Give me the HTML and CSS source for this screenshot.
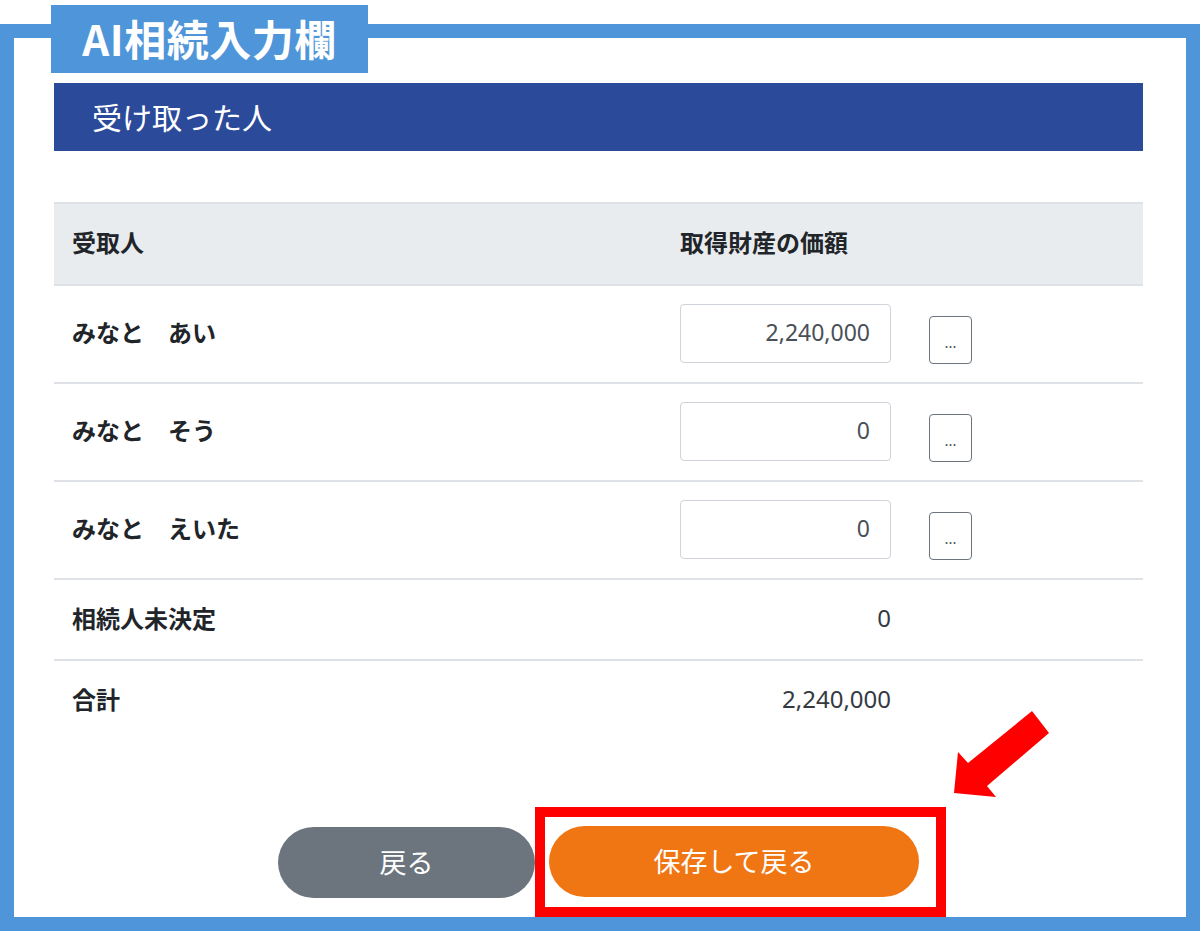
FILE: index.html
```html
<!DOCTYPE html>
<html lang="ja">
<head>
<meta charset="utf-8">
<title>AI相続入力欄</title>
<link rel="stylesheet" href="styles.css">
</head>
<body>
<div class="frame">
  <div class="badge">AI相続入力欄</div>
  <div class="section-title">受け取った人</div>
  <div class="table">
    <div class="row row-head">
      <div class="cell-name">受取人</div>
      <div class="cell-val">取得財産の価額</div>
    </div>
    <div class="row row-input">
      <div class="cell-name">みなと　あい</div>
      <div class="input">2,240,000</div>
      <div class="more">...</div>
    </div>
    <div class="row row-input">
      <div class="cell-name">みなと　そう</div>
      <div class="input">0</div>
      <div class="more">...</div>
    </div>
    <div class="row row-input">
      <div class="cell-name">みなと　えいた</div>
      <div class="input">0</div>
      <div class="more">...</div>
    </div>
    <div class="row row-sum">
      <div class="cell-name">相続人未決定</div>
      <div class="num">0</div>
    </div>
    <div class="row row-sum row-last">
      <div class="cell-name">合計</div>
      <div class="num">2,240,000</div>
    </div>
  </div>
  <div class="actions">
    <div class="btn btn-back">戻る</div>
    <div class="highlight">
      <div class="btn btn-save">保存して戻る</div>
    </div>
  </div>
  <svg class="arrow" width="105" height="97" viewBox="0 0 105 97">
    <polygon points="4,88 8,47 18,58 82,6 99,28 37,81 46,92" fill="#ff0000"/>
  </svg>
</div>
</body>
</html>
```
FILE: styles.css
```css
html, body {
  margin: 0;
  padding: 0;
  background: #ffffff;
}
body {
  font-family: "Noto Sans CJK JP", "Noto Sans", sans-serif;
  color: #212529;
  width: 1200px;
  height: 931px;
  overflow: hidden;
}
.frame {
  position: relative;
  box-sizing: border-box;
  margin-top: 24px;
  width: 1200px;
  height: 907px;
  border: 14px solid #4f95d9;
  padding: 45px 43px 0 40px;
  background: #ffffff;
}
.badge {
  position: absolute;
  left: 37px;
  top: -33px;
  width: 317px;
  height: 68px;
  background: #4f95d9;
  color: #ffffff;
  font-weight: 700;
  font-size: 42px;
  line-height: 66px;
  text-align: center;
  letter-spacing: 0.5px;
}
.section-title {
  height: 68px;
  background: #2b4a9a;
  color: #ffffff;
  font-size: 30px;
  line-height: 66px;
  padding-left: 38px;
}
.table {
  margin-top: 51px;
}
.row {
  box-sizing: border-box;
  display: grid;
  grid-template-columns: 626px 211px 81px;
  align-items: center;
  border-top: 2px solid #dee2e6;
}
.row-head {
  height: 82px;
  background: #e9ecef;
}
.row-input {
  height: 98px;
}
.row-sum {
  height: 81px;
}
.cell-name {
  padding-left: 18px;
  padding-bottom: 5px;
  font-weight: 700;
  font-size: 24px;
}
.cell-val {
  padding-bottom: 5px;
  font-weight: 700;
  font-size: 24px;
}
.input {
  box-sizing: border-box;
  height: 59px;
  border: 1px solid #ced4da;
  border-radius: 4px;
  text-align: right;
  padding-right: 20px;
  font-family: "Noto Sans", sans-serif;
  font-size: 23px;
  line-height: 55px;
  color: #495057;
  margin-top: -1px;
}
.more {
  box-sizing: border-box;
  margin-left: 38px;
  margin-top: 11px;
  width: 43px;
  height: 48px;
  border: 1px solid #6c757d;
  border-radius: 4px;
  text-align: center;
  font-family: "Noto Sans", sans-serif;
  font-size: 15px;
  line-height: 50px;
  color: #495057;
}
.num {
  padding-bottom: 4px;
  text-align: right;
  font-family: "Noto Sans", sans-serif;
  font-size: 24px;
  color: #343a40;
}
.actions {
  margin-top: 67px;
  display: flex;
  align-items: center;
  padding-left: 224px;
}
.btn {
  box-sizing: border-box;
  height: 71px;
  border-radius: 36px;
  color: #ffffff;
  font-size: 27px;
  line-height: 69px;
  text-align: center;
}
.btn-back {
  width: 257px;
  background: #6c757d;
}
.highlight {
  border: 10px solid #ff0000;
  padding: 9px 17px 10px 4px;
}
.btn-save {
  width: 370px;
  background: #f07613;
}
.arrow {
  position: absolute;
  left: 936px;
  top: 667px;
}
```
